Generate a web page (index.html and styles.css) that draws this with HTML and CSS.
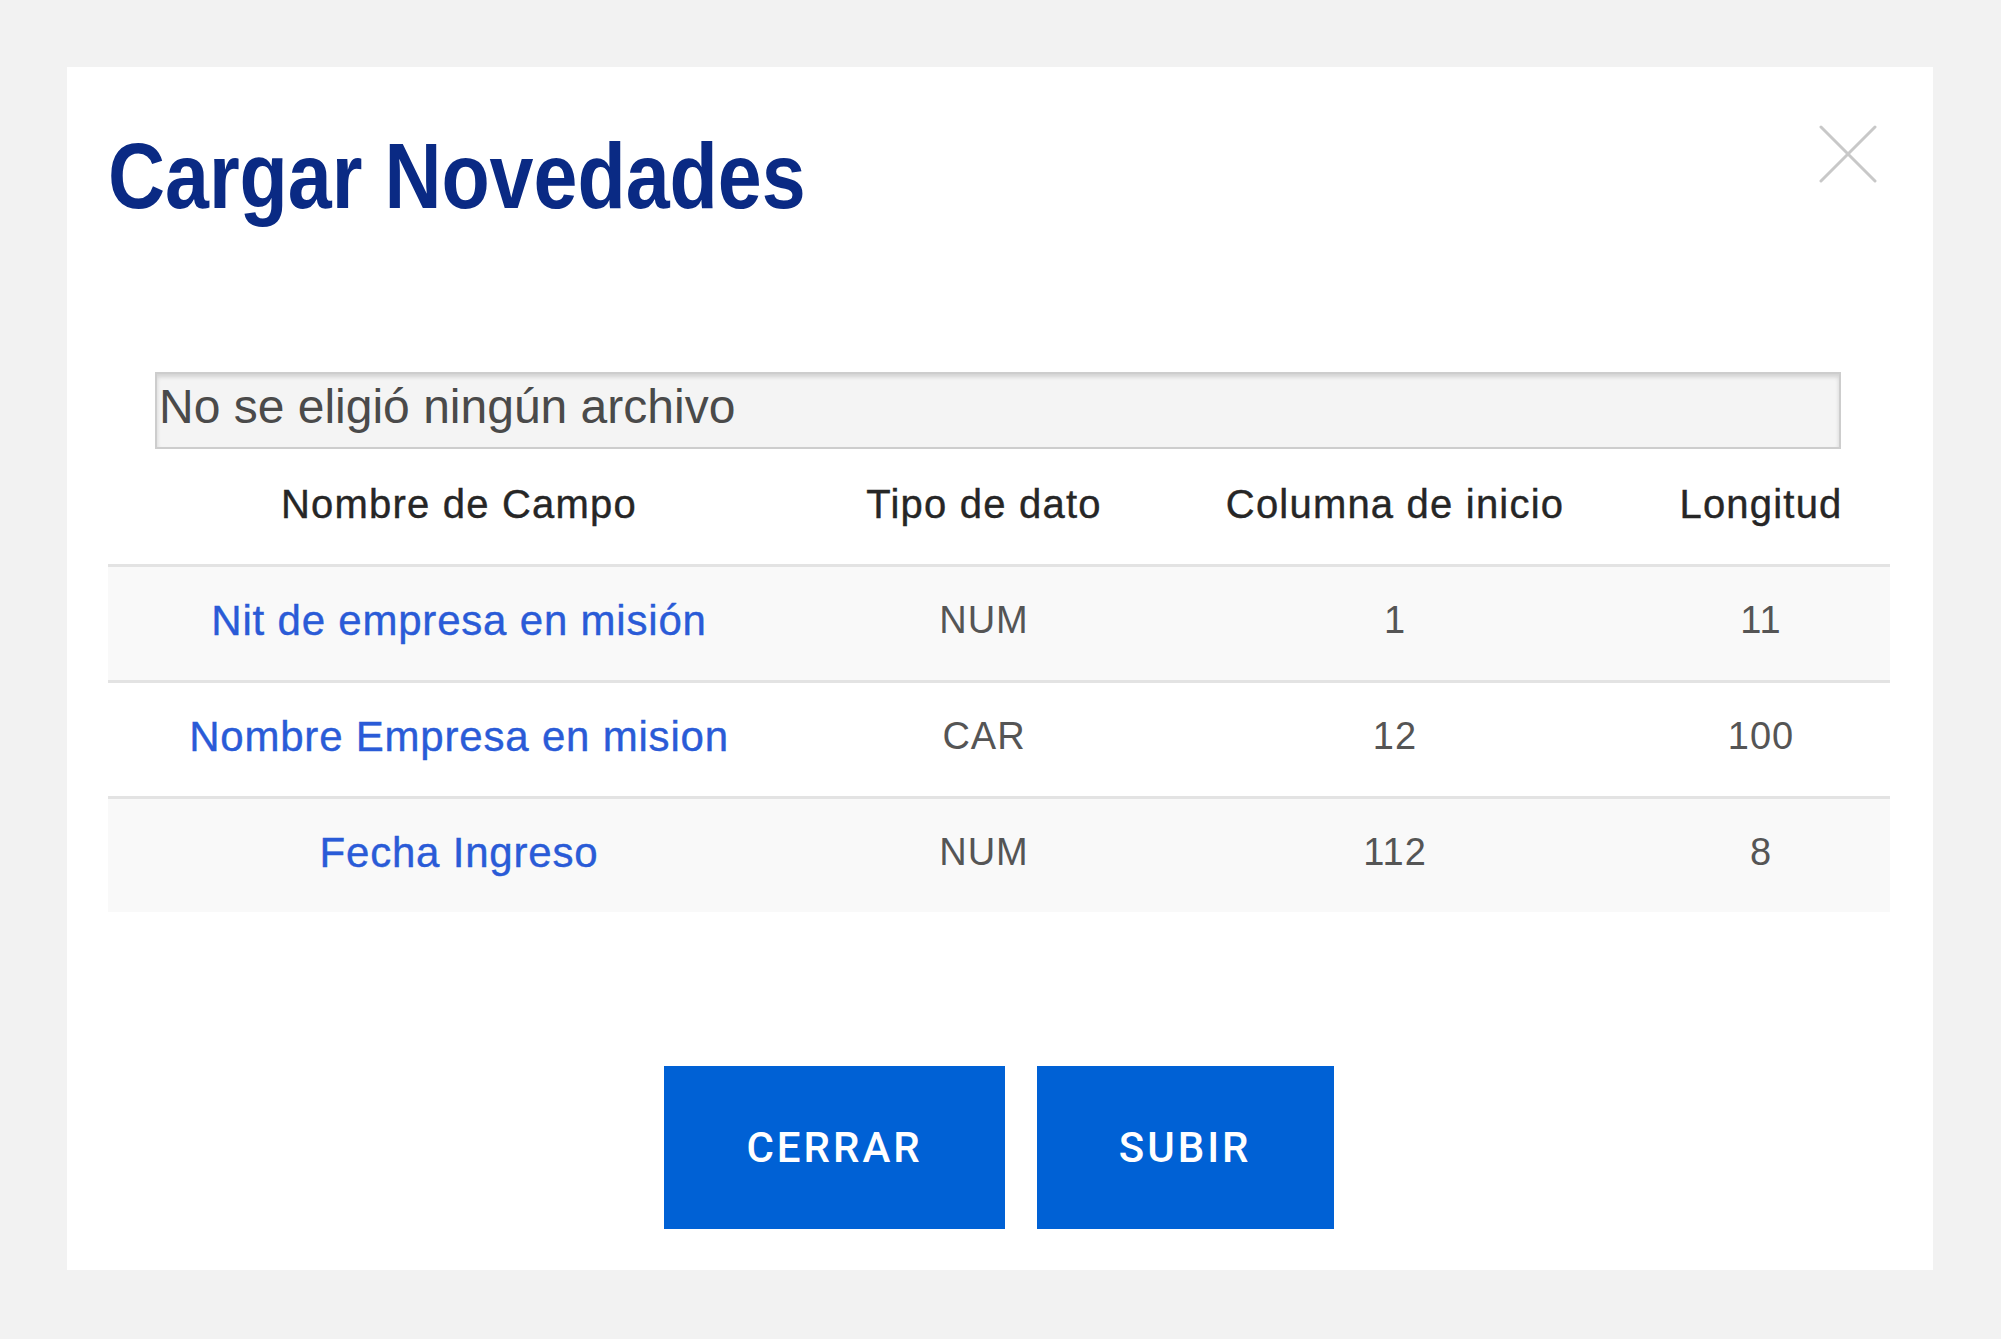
FILE: index.html
```html
<!DOCTYPE html>
<html lang="es">
<head>
<meta charset="UTF-8">
<meta name="viewport" content="width=device-width, initial-scale=1.0">
<title>Cargar Novedades</title>
<link rel="stylesheet" href="styles.css">
</head>
<body>
  <div class="modal">
    <button class="close" type="button" aria-label="Cerrar">
      <svg width="58" height="58" viewBox="0 0 58 58">
        <line x1="2" y1="2" x2="56" y2="56" />
        <line x1="56" y1="2" x2="2" y2="56" />
      </svg>
    </button>

    <h1 class="titulo">Cargar Novedades</h1>

    <label class="archivo">
      <span>No se eligió ningún archivo</span>
    </label>

    <table class="campos">
      <colgroup>
        <col class="c-nombre">
        <col class="c-tipo">
        <col class="c-inicio">
        <col class="c-long">
      </colgroup>
      <thead>
        <tr>
          <th>Nombre de Campo</th>
          <th>Tipo de dato</th>
          <th>Columna de inicio</th>
          <th>Longitud</th>
        </tr>
      </thead>
      <tbody>
        <tr>
          <td class="campo">Nit de empresa en misión</td>
          <td>NUM</td>
          <td>1</td>
          <td>11</td>
        </tr>
        <tr>
          <td class="campo">Nombre Empresa en mision</td>
          <td>CAR</td>
          <td>12</td>
          <td>100</td>
        </tr>
        <tr>
          <td class="campo">Fecha Ingreso</td>
          <td>NUM</td>
          <td>112</td>
          <td>8</td>
        </tr>
      </tbody>
    </table>

    <div class="acciones">
      <button class="boton" type="button">CERRAR</button>
      <button class="boton" type="button">SUBIR</button>
    </div>
  </div>
</body>
</html>
```

FILE: styles.css
```css
/* Modal de carga */
body {
  margin: 0;
  padding: 67px 68px 67px 67px;
  background-color: #f2f2f2;
  font-family: "Liberation Sans", Arial, sans-serif;
  color: #333;
}

.modal {
  position: relative;
  background-color: #fff;
  padding: 63px 43px 41px 41px;
}

.close {
  position: absolute;
  top: 58px;
  right: 56px;
  padding: 0;
  border: none;
  background: none;
  cursor: pointer;
}

.close svg line {
  stroke: #c8c8c8;
  stroke-width: 3;
  stroke-linecap: round;
}

/* no hay fuente condensada instalada: se estrecha la negrita */
.titulo {
  margin: 0;
  font-size: 92px;
  line-height: 92px;
  font-weight: bold;
  color: #0a2a84;
  transform: scaleX(0.858);
  transform-origin: left center;
}

/* Campo de archivo */
.archivo {
  display: block;
  margin: 150px 49px 0 47px;
  padding: 0 0 7px 2px;
  line-height: 66px;
  font-size: 48px;
  color: #4a4a4a;
  background-color: #f4f4f4;
  border: 2px solid #cdcdcd;
  box-shadow: inset 0 3px 4px rgba(0, 0, 0, 0.14);
}

/* Tabla */
.campos {
  width: 1782px;
  border-collapse: collapse;
  table-layout: fixed;
}

.c-nombre { width: 702px; }
.c-tipo { width: 348px; }
.c-inicio { width: 474px; }
.c-long { width: 258px; }

.campos th {
  height: 111px;
  padding: 0 0 4px;
  font-size: 40px;
  font-weight: normal;
  letter-spacing: 1.2px;
  color: #262626;
  -webkit-text-stroke: 0.4px #262626;
  border-bottom: 3px solid #e3e3e3;
}

.campos td {
  height: 107px;
  padding: 0 0 6px;
  text-align: center;
  font-size: 38px;
  letter-spacing: 1px;
  color: #555;
}

.campos tbody tr + tr td {
  border-top: 3px solid #e3e3e3;
}

.campos tbody tr:nth-child(odd) {
  background-color: #f9f9f9;
}

.campos td.campo {
  font-size: 42px;
  letter-spacing: 0.8px;
  color: #2a5bd7;
  -webkit-text-stroke: 0.4px #2a5bd7;
}

/* Botones */
.acciones {
  display: flex;
  justify-content: center;
  gap: 32px;
  margin-top: 154px;
}

.boton {
  height: 163px;
  padding: 0 82px;
  border: none;
  background-color: #0061d5;
  color: #fff;
  font-family: Roboto, "Liberation Sans", sans-serif;
  font-size: 42px;
  font-weight: 500;
  letter-spacing: 3px;
  cursor: pointer;
}
```
